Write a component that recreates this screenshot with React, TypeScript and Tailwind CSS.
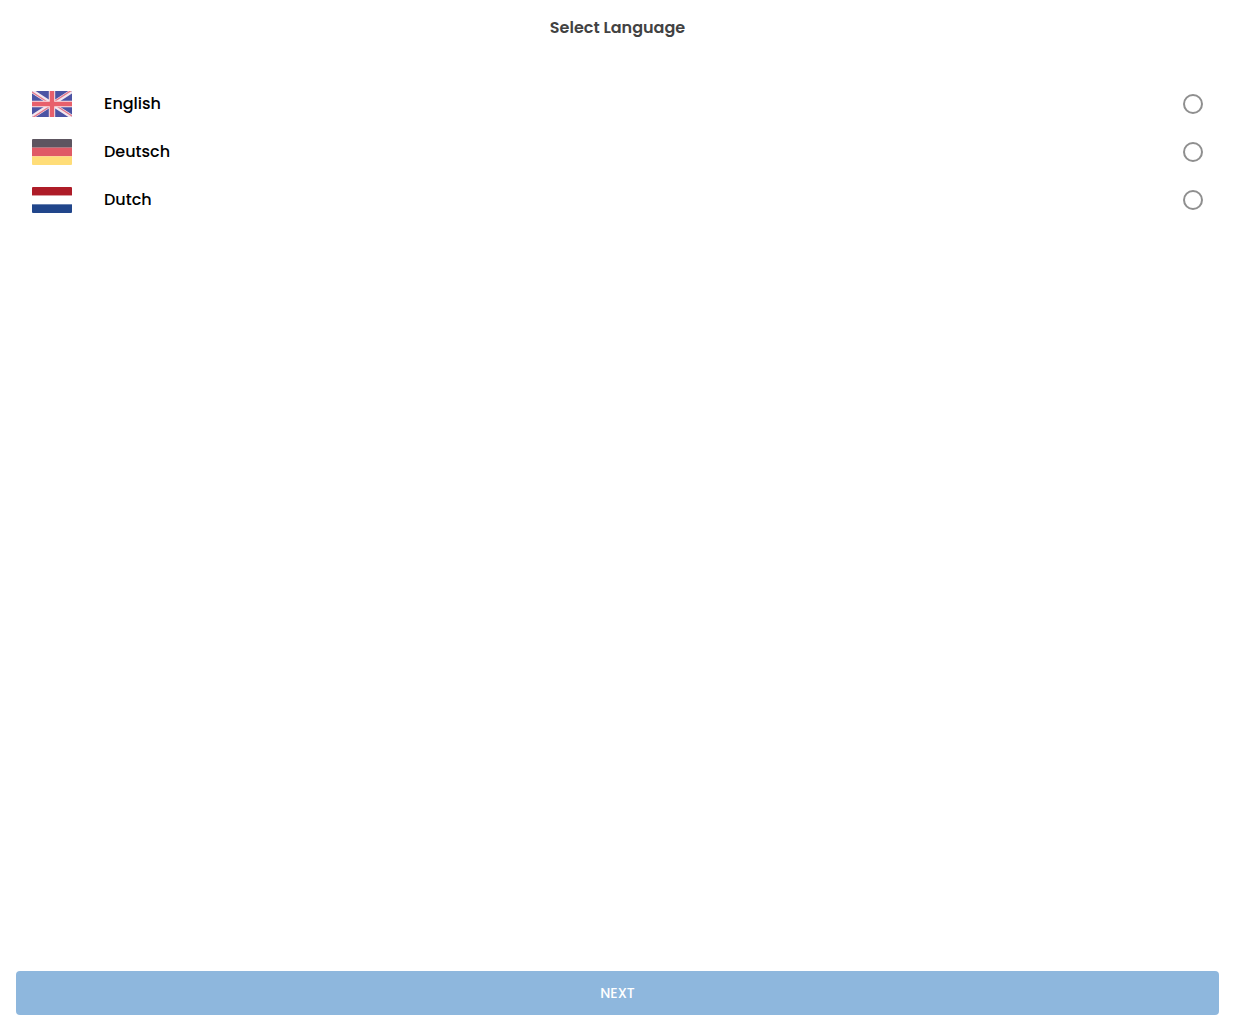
import { useState } from "react";

const BritishFlag = () => (
  <svg viewBox="0 0 40 26" className="w-10 h-[26px]" aria-hidden="true">
    <clipPath id="gb">
      <rect width="40" height="26" rx="1" />
    </clipPath>
    <g clipPath="url(#gb)">
      <rect width="40" height="26" fill="#4c54a4" />
      <path d="M0 0l40 26M40 0L0 26" stroke="#f3e6ee" strokeWidth="4" />
      <path
        d="M0 1l20 13M20 12L40 -1M20 12l20 13M0 27l20 -13"
        stroke="#e5788a"
        strokeWidth="1.4"
      />
      <path d="M20 0v26M0 13h40" stroke="#f8e4e8" strokeWidth="6.4" />
      <path d="M20 0v26M0 13h40" stroke="#e8606c" strokeWidth="4.4" />
    </g>
  </svg>
);

const StripedFlag = ({ colors }: { colors: string[] }) => (
  <svg viewBox="0 0 40 26" className="w-10 h-[26px] rounded-[1px]" aria-hidden="true">
    {colors.map((color, i) => (
      <rect key={color} y={(i * 26) / 3} width="40" height={26 / 3} fill={color} />
    ))}
  </svg>
);

const languages = [
  { code: "en", label: "English", flag: <BritishFlag /> },
  {
    code: "de",
    label: "Deutsch",
    flag: <StripedFlag colors={["#5d5560", "#e05a66", "#ffdd78"]} />,
  },
  {
    code: "nl",
    label: "Dutch",
    flag: <StripedFlag colors={["#ae1c28", "#ffffff", "#21468b"]} />,
  },
];

const App = () => {
  const [selected, setSelected] = useState("");

  return (
    <main className="flex min-h-screen flex-col bg-white font-['Poppins','Inter',sans-serif]">
      <header className="flex h-14 items-center justify-center">
        <h1 className="text-base font-semibold text-[#424242]">
          Select Language
        </h1>
      </header>
      <form
        className="flex flex-1 flex-col"
        onSubmit={(e) => e.preventDefault()}
      >
        <div className="flex flex-1 flex-col px-8 pt-6">
          {languages.map(({ code, label, flag }) => (
            <label
              key={code}
              className="flex h-12 cursor-pointer items-center gap-8"
            >
              {flag}
              <span className="flex-1 text-base font-medium text-black">
                {label}
              </span>
              <input
                type="radio"
                name="language"
                value={code}
                checked={selected === code}
                onChange={() => setSelected(code)}
                className="size-5 appearance-none rounded-full border-2 border-[#8f8f8f] checked:border-[6px] checked:border-[#8eb7dd]"
              />
            </label>
          ))}
        </div>
        <div className="p-4">
          <button
            type="submit"
            className="h-11 w-full rounded bg-[#8eb7dd] text-sm font-medium text-white"
          >
            NEXT
          </button>
        </div>
      </form>
    </main>
  );
};

export default App;
